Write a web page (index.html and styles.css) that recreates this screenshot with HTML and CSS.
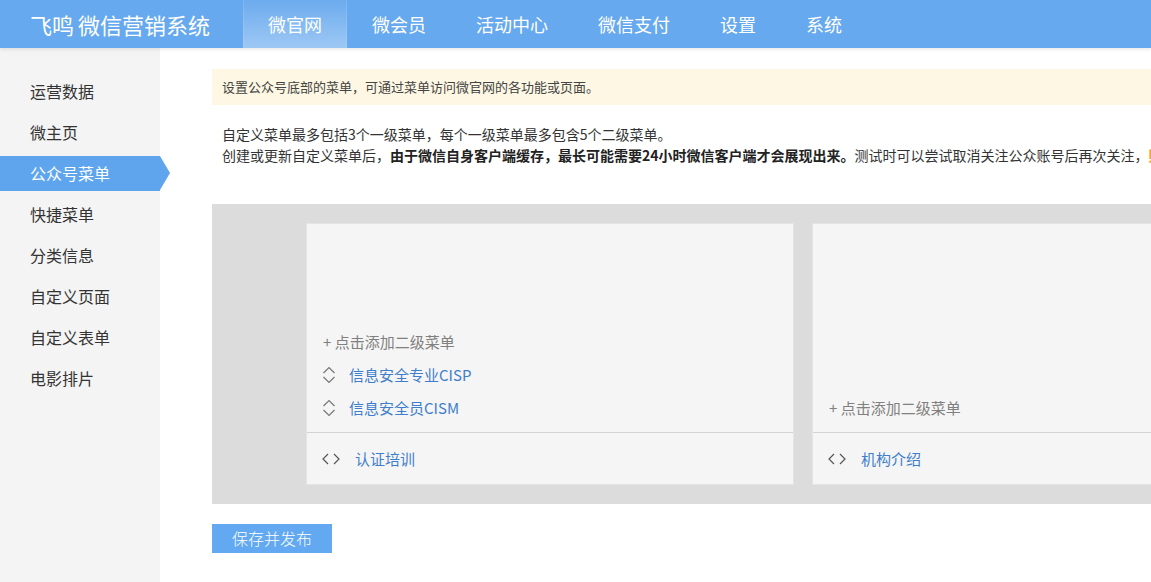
FILE: index.html
```html
<!DOCTYPE html>
<html lang="zh-CN">
<head>
<meta charset="utf-8">
<title>飞鸣 微信营销系统</title>
<link rel="stylesheet" href="styles.css">
</head>
<body>
<header class="header">
  <div class="logo">飞鸣 微信营销系统</div>
  <nav class="tabs">
    <a class="tab active">微官网</a>
    <a class="tab">微会员</a>
    <a class="tab">活动中心</a>
    <a class="tab">微信支付</a>
    <a class="tab">设置</a>
    <a class="tab">系统</a>
  </nav>
</header>
<div class="main">
  <aside class="sidebar">
    <a class="side-item">运营数据</a>
    <a class="side-item">微主页</a>
    <a class="side-item active">公众号菜单</a>
    <a class="side-item">快捷菜单</a>
    <a class="side-item">分类信息</a>
    <a class="side-item">自定义页面</a>
    <a class="side-item">自定义表单</a>
    <a class="side-item">电影排片</a>
  </aside>
  <section class="content">
    <div class="notice">设置公众号底部的菜单，可通过菜单访问微官网的各功能或页面。</div>
    <p class="desc">自定义菜单最多包括3个一级菜单，每个一级菜单最多包含5个二级菜单。<br>创建或更新自定义菜单后，<b>由于微信自身客户端缓存，最长可能需要24小时微信客户端才会展现出来。</b>测试时可以尝试取消关注公众账号后再次关注，<b class="warn">则可以看到创建后的效果。</b></p>
    <div class="editor">
      <div class="menu-col">
        <div class="subs">
          <div class="sub add">+ 点击添加二级菜单</div>
          <div class="sub">
            <svg class="sort" width="14" height="18" viewBox="0 0 14 18"><polyline points="1.5,7 7,1.5 12.5,7" /><polyline points="1.5,11 7,16.5 12.5,11" /></svg>
            <span class="link">信息安全专业CISP</span>
          </div>
          <div class="sub">
            <svg class="sort" width="14" height="18" viewBox="0 0 14 18"><polyline points="1.5,7 7,1.5 12.5,7" /><polyline points="1.5,11 7,16.5 12.5,11" /></svg>
            <span class="link">信息安全员CISM</span>
          </div>
        </div>
        <div class="main-item">
          <svg class="code" width="18" height="12" viewBox="0 0 18 12"><polyline points="6,1 1,6 6,11" /><polyline points="12,1 17,6 12,11" /></svg>
          <span class="link">认证培训</span>
        </div>
      </div>
      <div class="menu-col">
        <div class="subs">
          <div class="sub add">+ 点击添加二级菜单</div>
        </div>
        <div class="main-item">
          <svg class="code" width="18" height="12" viewBox="0 0 18 12"><polyline points="6,1 1,6 6,11" /><polyline points="12,1 17,6 12,11" /></svg>
          <span class="link">机构介绍</span>
        </div>
      </div>
    </div>
    <button class="save">保存并发布</button>
  </section>
</div>
</body>
</html>
```
FILE: styles.css
```css
html, body {
  margin: 0;
  padding: 0;
  overflow: hidden;
  height: 100%;
}
body {
  font-family: "Noto Sans CJK SC", "Liberation Sans", sans-serif;
  color: #333;
  background: #fff;
}
.header {
  height: 48px;
  background: #67a9ee;
  display: flex;
  align-items: stretch;
  box-shadow: 0 2px 3px rgba(0, 0, 0, 0.08);
  position: relative;
  z-index: 2;
}
.logo {
  width: 183px;
  padding-left: 30px;
  margin-right: 30px;
  color: #fff;
  font-size: 22px;
  line-height: 48px;
  white-space: nowrap;
  word-spacing: -1px;
}
.tabs {
  display: flex;
}
.tab {
  display: block;
  padding: 0 25px;
  color: #fff;
  font-size: 18px;
  line-height: 48px;
  white-space: nowrap;
}
.tab.active {
  background: linear-gradient(#6cabee, #9dc8f4);
  box-shadow: inset 1px 0 0 rgba(255,255,255,0.12), inset -1px 0 0 rgba(255,255,255,0.12);
}
.main {
  display: flex;
  height: calc(100% - 48px);
}
.sidebar {
  width: 160px;
  flex: none;
  background: #f4f4f4;
  padding-top: 26px;
  display: flex;
  flex-direction: column;
  gap: 6px;
}
.side-item {
  display: block;
  height: 35px;
  line-height: 35px;
  padding-left: 30px;
  font-size: 16px;
  color: #333;
  position: relative;
}
.side-item.active {
  background: #5ea5ee;
  color: #fff;
}
.side-item.active::after {
  content: "";
  position: absolute;
  left: 160px;
  top: 0;
  border-left: 10px solid #5ea5ee;
  border-top: 17.5px solid transparent;
  border-bottom: 17.5px solid transparent;
}
.content {
  flex: none;
  width: 1150px;
  padding: 21px 0 0 52px;
}
.notice {
  background: #fdf7e3;
  height: 36px;
  line-height: 36px;
  padding-left: 10px;
  font-size: 13px;
  color: #444;
}
.desc {
  margin: 19px 0 0;
  padding-left: 10px;
  font-size: 14px;
  line-height: 21px;
  color: #333;
  white-space: nowrap;
}
.desc b {
  font-weight: bold;
  color: #222;
}
.desc .warn {
  color: #f0a020;
}
.editor {
  margin-top: 38px;
  background: #dcdcdc;
  height: 300px;
  box-sizing: border-box;
  padding: 20px 0 20px 95px;
  display: flex;
  gap: 20px;
}
.menu-col {
  width: 486px;
  flex: none;
  background: #f5f5f5;
  display: flex;
  flex-direction: column;
  box-shadow: 0 0 0 1px #e4e4e4;
}
.subs {
  flex: 1;
  display: flex;
  flex-direction: column;
  justify-content: flex-end;
  padding-bottom: 8px;
}
.sub {
  height: 33px;
  display: flex;
  align-items: center;
  padding-left: 15px;
  font-size: 15px;
}
.sub.add {
  padding-left: 16px;
  color: #808080;
}
.sort {
  fill: none;
  stroke: #777;
  stroke-width: 1.2;
  margin-right: 13px;
}
.link {
  color: #3f7ecb;
}
.main-item {
  height: 51px;
  border-top: 1px solid #d4d4d4;
  display: flex;
  align-items: center;
  padding-left: 15px;
  font-size: 15px;
}
.code {
  fill: none;
  stroke: #555;
  stroke-width: 1.2;
  margin-right: 15px;
}
.save {
  display: block;
  margin-top: 20px;
  width: 120px;
  height: 29px;
  border: 0;
  padding: 0;
  background: #62a9f1;
  color: #fff;
  font-family: "Noto Sans CJK SC", "Liberation Sans", sans-serif;
  font-size: 16px;
  font-weight: 300;
  line-height: 29px;
}
```
